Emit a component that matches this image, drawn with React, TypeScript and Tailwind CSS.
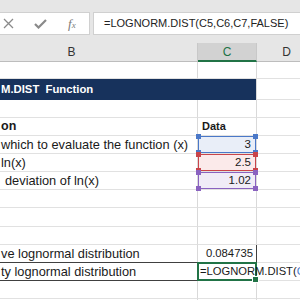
import React from "react";

// Excel-style sheet: LOGNORM.DIST example, scrolled so column A is off screen.

const font = { fontFamily: '"Liberation Sans", Arial, sans-serif' };

type Row = {
  h: number;
  b?: React.ReactNode;
  c?: React.ReactNode;
  kind?: "title" | "blue" | "red" | "purple" | "result" | "active";
};

const rows: Row[] = [
  { h: 17 },
  { h: 21, kind: "title" },
  { h: 18 },
  {
    h: 18,
    b: <span className="font-bold text-[12.5px]">on</span>,
    c: <span className="font-bold pl-[4px] text-[11px]">Data</span>,
  },
  { h: 18, b: "which to evaluate the function (x)", c: "3", kind: "blue" },
  { h: 18, b: "ln(x)", c: "2.5", kind: "red" },
  { h: 18, b: <span className="pl-[4px]">deviation of ln(x)</span>, c: "1.02", kind: "purple" },
  { h: 18 },
  { h: 19 },
  { h: 18 },
  { h: 18, b: "ve lognormal distribution", c: "0.084735", kind: "result" },
  { h: 18, b: "ty lognormal distribution", kind: "active" },
  { h: 18 },
  { h: 18 },
];

const rangeStyle: Record<string, { bg: string; border: string; dot: string }> = {
  blue: { bg: "bg-[#e9eef8]", border: "border-[#4a78c8]", dot: "bg-[#4a78c8]" },
  red: { bg: "bg-[#fbeaea]", border: "border-[#c9444a]", dot: "bg-[#c9444a]" },
  purple: { bg: "bg-[#f0ecf7]", border: "border-[#8a62c0]", dot: "bg-[#8a62c0]" },
};

function RangeCell({ kind, value }: { kind: string; value: React.ReactNode }) {
  const s = rangeStyle[kind];
  return (
    <div className={`relative h-full w-full ${s.bg} border-[1.5px] ${s.border} flex items-center justify-end pr-[4px] text-[11.5px]`}>
      {value}
      <span className={`absolute -left-[3px] -top-[3px] h-[5px] w-[5px] ${s.dot}`} />
      <span className={`absolute -right-[3px] -top-[3px] h-[5px] w-[5px] ${s.dot}`} />
      <span className={`absolute -left-[3px] -bottom-[3px] h-[5px] w-[5px] ${s.dot}`} />
      <span className={`absolute -right-[3px] -bottom-[3px] h-[5px] w-[5px] ${s.dot}`} />
    </div>
  );
}

function SheetRow({ row }: { row: Row }) {
  if (row.kind === "title") {
    return (
      <div className="flex shrink-0" style={{ height: row.h }}>
        <div className="w-[257px] shrink-0 bg-[#17325c] text-white font-bold text-[11.3px] flex items-center pl-[1px] border-r border-[#d9d9d9]">
          M.DIST&nbsp; Function
        </div>
        <div className="flex-1 border-b border-[#e1e1e1]" />
      </div>
    );
  }

  const isResult = row.kind === "result" || row.kind === "active";
  const bBorder = isResult ? "border-b border-[#404040]" : "border-b border-[#e1e1e1]";

  let cCell: React.ReactNode;
  if (row.kind === "blue" || row.kind === "red" || row.kind === "purple") {
    cCell = (
      <div className="w-[59px] shrink-0 border-r border-[#d9d9d9] border-b border-b-[#e1e1e1] relative z-10">
        <RangeCell kind={row.kind} value={row.c} />
      </div>
    );
  } else if (row.kind === "result") {
    cCell = (
      <div className="w-[59px] shrink-0 border-r border-[#404040] border-b border-b-[#404040] flex items-center justify-end pr-[3px] text-[11.3px]">
        {row.c}
      </div>
    );
  } else if (row.kind === "active") {
    cCell = (
      <div className="w-[59px] shrink-0 relative border-b border-[#404040]">
        <div className="absolute -left-[1px] -top-[1px] h-[19px] w-[60px] border-2 border-[#217346] z-10" />
        <span className="absolute right-[-2px] bottom-[-3px] h-[5px] w-[5px] bg-[#217346] z-20 border border-white box-content" />
        <div className="absolute left-[2px] top-0 h-full flex items-center whitespace-nowrap z-20 text-[11.2px]">
          =LOGNORM.DIST(<span className="text-[#4a78c8]">C5</span>
        </div>
      </div>
    );
  } else {
    cCell = (
      <div className="w-[59px] shrink-0 border-r border-[#d9d9d9] border-b border-b-[#e1e1e1] flex items-center">
        {row.c}
      </div>
    );
  }

  return (
    <div className="flex shrink-0" style={{ height: row.h }}>
      <div className={`w-[198px] shrink-0 border-r border-r-[#d9d9d9] ${bBorder} flex items-center whitespace-nowrap overflow-hidden pl-[1px] text-[12.8px]`}>
        {row.b}
      </div>
      {cCell}
      <div className="flex-1 border-b border-[#e1e1e1]" />
    </div>
  );
}

function FormulaBar() {
  return (
    <div className="h-[43px] bg-[#e6e6e6] pt-[12px] shrink-0">
      <div className="flex h-[23px] gap-[3px]">
        <div className="w-[90px] bg-white border border-[#d0d0d0] border-l-0 flex items-center text-[#8a8a8a]">
          <svg width="11" height="11" viewBox="0 0 11 11" className="ml-[3px]">
            <path d="M1 1 L10 10 M10 1 L1 10" stroke="#8a8a8a" strokeWidth="1.3" fill="none" />
          </svg>
          <svg width="13" height="11" viewBox="0 0 13 11" className="ml-[20px]">
            <path d="M1 6 L4.5 9.5 L12 2" stroke="#8a8a8a" strokeWidth="2.2" fill="none" />
          </svg>
          <span
            className="ml-[21px] italic text-[13px] leading-none text-[#7a7a7a]"
            style={{ fontFamily: '"Liberation Serif", "Times New Roman", serif' }}
          >
            f<span className="text-[9px]">x</span>
          </span>
        </div>
        <div className="flex-1 bg-white border border-[#d0d0d0] border-r-0 flex items-center pl-[10px] text-[11px] text-[#222] whitespace-nowrap overflow-hidden">
          =LOGNORM.DIST(C5,C6,C7,FALSE)
        </div>
      </div>
    </div>
  );
}

function ColumnHeaders() {
  return (
    <div className="flex h-[19px] shrink-0 bg-[#e6e6e6] border-b border-[#bdbdbd] text-[12px] text-[#333]">
      <div className="w-[198px] shrink-0 flex items-center justify-center pl-[46px] border-r border-[#c8c8c8]">
        <span className="-ml-[100px]">B</span>
      </div>
      <div className="w-[59px] shrink-0 bg-[#d2d2d2] border-b-2 border-[#217346] -mb-[1px] flex items-center justify-center text-[#217346] border-r border-r-[#c8c8c8]">
        C
      </div>
      <div className="w-[59px] shrink-0 flex items-center justify-center">D</div>
    </div>
  );
}

export default function App() {
  return (
    <div className="w-[300px] h-[300px] overflow-hidden bg-white flex flex-col text-[12px] text-[#1a1a1a]" style={font}>
      <FormulaBar />
      <ColumnHeaders />
      {rows.map((r, i) => (
        <SheetRow key={i} row={r} />
      ))}
    </div>
  );
}
